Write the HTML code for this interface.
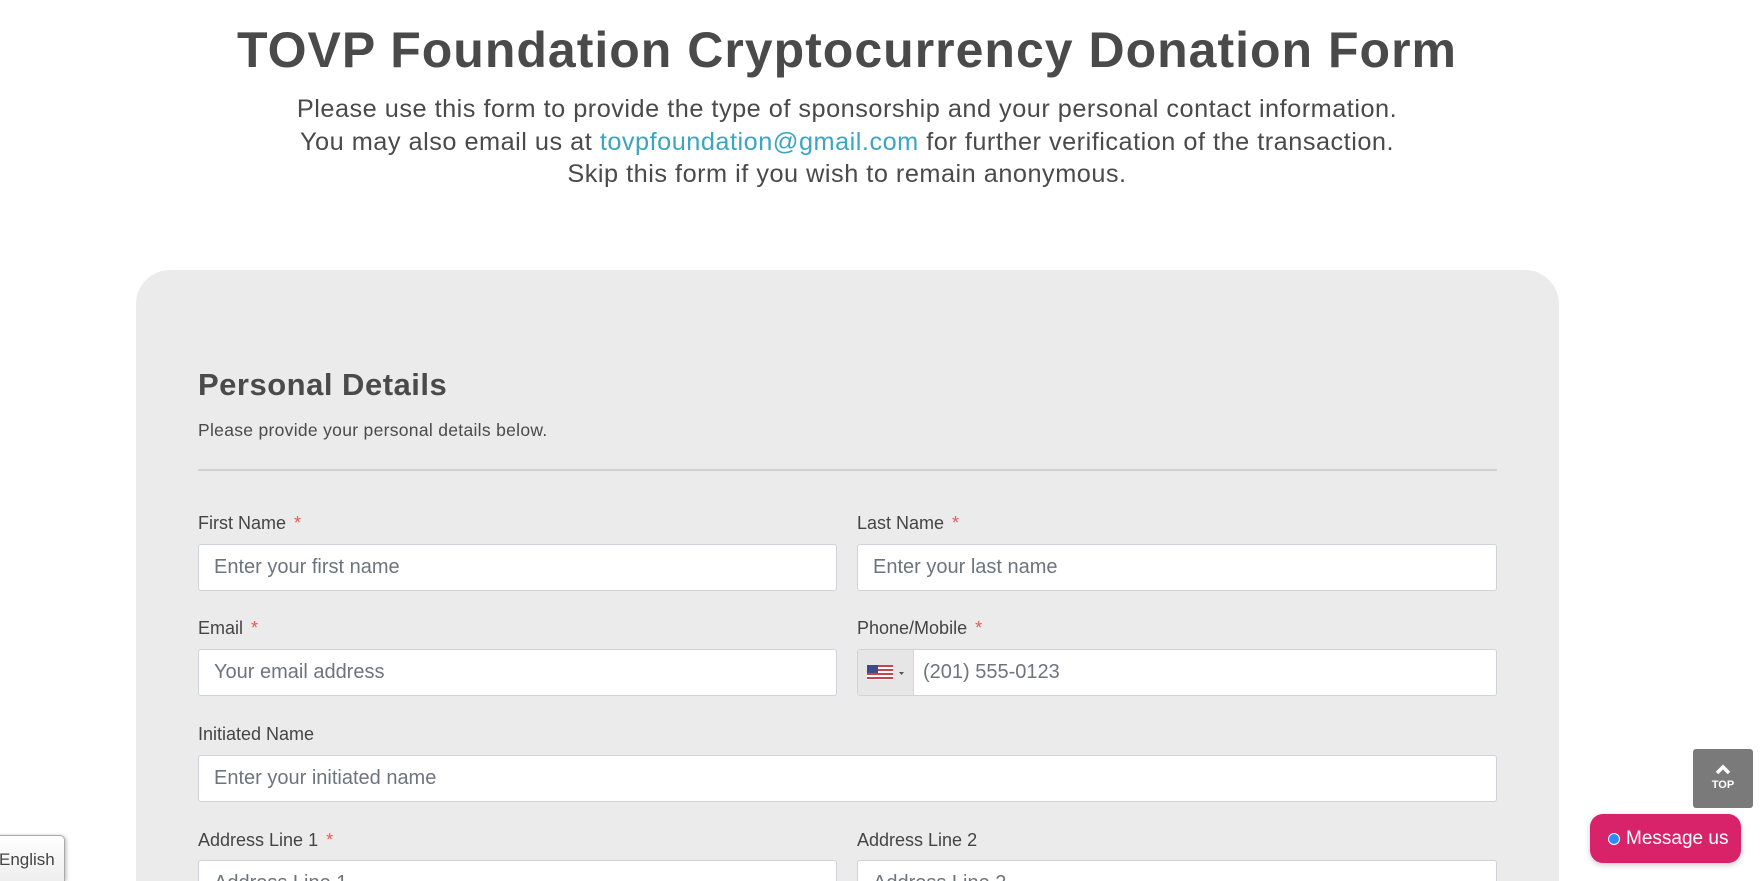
<!DOCTYPE html>
<html><head><meta charset="utf-8"><style>
*{box-sizing:border-box;margin:0;padding:0}
html{width:1760px;height:881px;overflow:hidden}
body{width:1760px;height:881px;overflow:hidden;background:#fff;font-family:"Liberation Sans",sans-serif;color:#4a4a4a;position:relative}
h1{position:absolute;left:0;width:1694px;top:21px;text-align:center;font-size:50px;font-weight:bold;color:#4a4a4a;letter-spacing:1px}
.sub{position:absolute;left:0;width:1694px;top:93px;text-align:center;font-size:25.3px;line-height:32.5px;color:#4a4a4a;letter-spacing:0.5px}
.sub a{color:#3aa6bf;text-decoration:none}
.card{position:absolute;left:136px;top:270px;width:1423px;height:611px;background:#ebebeb;border-radius:34px 34px 0 0}
.abs{position:absolute}
h2{position:absolute;left:198px;top:367px;font-size:31px;font-weight:bold;color:#4a4a4a;letter-spacing:0.5px}
.desc{left:198px;top:420px;font-size:17.5px;letter-spacing:0.3px}
.hr{left:198px;top:469px;width:1299px;height:2px;background:#d0d0d0}
.lbl{font-size:18px;color:#444}
.lbl b{color:#e85a5a;font-weight:normal;margin-left:8px}
.in{background:#fff;border:1px solid #cfd3d7;border-radius:3px;height:47px;font-size:20px;color:#6c757d;padding-left:15px;line-height:45px}
.top{left:1693px;top:749px;width:60px;height:59px;background:#7a7a7a;border-radius:3px;color:#fff;text-align:center;font-size:11px;font-weight:bold}
.msg{left:1590px;top:814px;width:151px;height:49px;background:#d8226a;border-radius:13px;color:#fff;font-size:19px;line-height:49px;padding-left:36px;box-shadow:0 2px 6px rgba(0,0,0,.2)}
.msg i{position:absolute;left:18px;top:19px;width:12px;height:12px;border-radius:50%;background:#2a8cff;border:1px solid #fff}
.eng{left:-10px;top:835px;width:75px;height:46px;background:linear-gradient(#fff,#eee);border:1px solid #aaa;border-bottom:none;border-radius:5px 5px 0 0;box-shadow:1px 1px 4px rgba(0,0,0,.3);font-size:17px;padding:14px 0 0 8px;color:#444}
.clip{position:absolute;left:0;top:0;width:1760px;height:881px;overflow:hidden}
</style></head><body><div class="clip">
<h1>TOVP Foundation Cryptocurrency Donation Form</h1>
<div class="sub">Please use this form to provide the type of sponsorship and your personal contact information.<br>You may also email us at <a>tovpfoundation@gmail.com</a> for further verification of the transaction.<br>Skip this form if you wish to remain anonymous.</div>
<div class="card"></div>
<h2>Personal Details</h2>
<div class="abs desc">Please provide your personal details below.</div>
<div class="abs hr"></div>
<div class="abs lbl" style="left:198px;top:513px">First Name<b>*</b></div>
<div class="abs lbl" style="left:857px;top:513px">Last Name<b>*</b></div>
<div class="abs in" style="left:198px;top:544px;width:639px">Enter your first name</div>
<div class="abs in" style="left:857px;top:544px;width:640px">Enter your last name</div>
<div class="abs lbl" style="left:198px;top:618px">Email<b>*</b></div>
<div class="abs lbl" style="left:857px;top:618px">Phone/Mobile<b>*</b></div>
<div class="abs in" style="left:198px;top:649px;width:639px">Your email address</div>
<div class="abs in" style="left:857px;top:649px;width:640px;padding-left:65px">(201) 555-0123</div>
<div class="abs" style="left:858px;top:650px;width:56px;height:45px;background:#e6e6e6;border-right:1px solid #d5d5d5"></div>
<svg class="abs" style="left:867px;top:665px" width="40" height="16"><rect width="26" height="15" fill="#fff"/><g fill="#c8444a"><rect y="0" width="26" height="2"/><rect y="4" width="26" height="2"/><rect y="8" width="26" height="2"/><rect y="12" width="26" height="2"/></g><rect width="11" height="8" fill="#3c4b8a"/><path d="M32 7h5l-2.5 3z" fill="#555"/></svg>
<div class="abs lbl" style="left:198px;top:724px">Initiated Name</div>
<div class="abs in" style="left:198px;top:755px;width:1299px">Enter your initiated name</div>
<div class="abs lbl" style="left:198px;top:830px">Address Line 1<b>*</b></div>
<div class="abs lbl" style="left:857px;top:830px">Address Line 2</div>
<div class="abs in" style="left:198px;top:860px;width:639px;height:21px;line-height:45px;overflow:hidden;border-bottom:none;border-radius:3px 3px 0 0">Address Line 1</div>
<div class="abs in" style="left:857px;top:860px;width:640px;height:21px;line-height:45px;overflow:hidden;border-bottom:none;border-radius:3px 3px 0 0">Address Line 2</div>
<div class="abs top"><svg width="60" height="30" style="display:block"><path d="M24 24l6-6 6 6" stroke="#fff" stroke-width="3.5" fill="none"/></svg>TOP</div>
<div class="abs msg"><i></i>Message us</div>
<div class="abs eng">English</div>
</div></body></html>
